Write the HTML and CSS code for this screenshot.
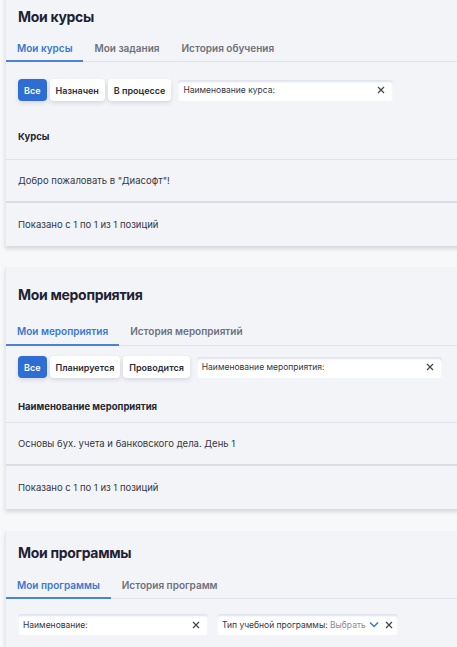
FILE: index.html
```html
<!DOCTYPE html>
<html>
<head>
<title>Мои курсы</title>
<link rel="stylesheet" href="styles.css">
</head>
<body>
  <div class="card card-courses">
    <h2 class="card-title">Мои курсы</h2>
    <div class="tabs">
      <div class="tab active">Мои курсы</div>
      <div class="tab">Мои задания</div>
      <div class="tab">История обучения</div>
    </div>
    <div class="filters">
      <button class="chip selected">Все</button>
      <button class="chip">Назначен</button>
      <button class="chip">В процессе</button>
      <div class="field field-course">
        <span class="field-label">Наименование курса:</span>
        <svg class="clear" width="8" height="8" viewBox="0 0 8 8"><path d="M1 1L7 7M7 1L1 7" stroke="#444" stroke-width="1.2"/></svg>
      </div>
    </div>
    <div class="table">
      <div class="row head">Курсы</div>
      <div class="row">Добро пожаловать в "Диасофт"!</div>
      <div class="row foot">Показано с 1 по 1 из 1 позиций</div>
    </div>
  </div>

  <div class="card card-events">
    <h2 class="card-title">Мои мероприятия</h2>
    <div class="tabs">
      <div class="tab active">Мои мероприятия</div>
      <div class="tab">История мероприятий</div>
    </div>
    <div class="filters">
      <button class="chip selected">Все</button>
      <button class="chip">Планируется</button>
      <button class="chip">Проводится</button>
      <div class="field field-event">
        <span class="field-label">Наименование мероприятия:</span>
        <svg class="clear" width="8" height="8" viewBox="0 0 8 8"><path d="M1 1L7 7M7 1L1 7" stroke="#444" stroke-width="1.2"/></svg>
      </div>
    </div>
    <div class="table">
      <div class="row head">Наименование мероприятия</div>
      <div class="row">Основы бух. учета и банковского дела. День 1</div>
      <div class="row foot">Показано с 1 по 1 из 1 позиций</div>
    </div>
  </div>

  <div class="card card-programs">
    <h2 class="card-title">Мои программы</h2>
    <div class="tabs">
      <div class="tab active">Мои программы</div>
      <div class="tab">История программ</div>
    </div>
    <div class="filters">
      <div class="field field-name">
        <span class="field-label">Наименование:</span>
        <svg class="clear" width="8" height="8" viewBox="0 0 8 8"><path d="M1 1L7 7M7 1L1 7" stroke="#444" stroke-width="1.2"/></svg>
      </div>
      <div class="field field-type">
        <span class="field-label">Тип учебной программы: <span class="placeholder">Выбрать</span></span>
        <svg class="chevron" width="10" height="7" viewBox="0 0 10 7"><path d="M1 1.5L5 5.5L9 1.5" fill="none" stroke="#3a78d0" stroke-width="1.5"/></svg>
        <svg class="clear" width="8" height="8" viewBox="0 0 8 8"><path d="M1 1L7 7M7 1L1 7" stroke="#444" stroke-width="1.2"/></svg>
      </div>
    </div>
  </div>
</body>
</html>
```

FILE: styles.css
```css
body {
  margin: 0;
  background-color: #f7f8fa;
  font-family: Inter, "Noto Sans", sans-serif;
  color: #2b2e38;
  overflow: hidden;
}

.card {
  background-color: #f3f4f8;
  margin-left: 5px;
  margin-right: -20px;
  border-left: 1px solid #e7e9ee;
  box-shadow: 0 3px 4px rgba(0, 0, 0, 0.13);
  padding-top: 17px;
}

.card-courses {
  margin-top: -10px;
  margin-bottom: 21px;
}

.card-events {
  padding-top: 18px;
  margin-bottom: 22px;
}

.card-programs {
  padding-top: 12px;
  padding-bottom: 40px;
}

.card-title {
  margin: 0 0 12px 12px;
  font-size: 14px;
  line-height: 20px;
  font-weight: 700;
  letter-spacing: -0.3px;
  color: #1f2233;
}

.card-courses .card-title {
  margin-bottom: 8px;
}

.card-events .card-title {
  margin-bottom: 13px;
}

.card-programs .card-title {
  margin-bottom: 9px;
}

.tabs {
  display: flex;
  border-bottom: 1px solid #e0e3e9;
}

.tab {
  padding: 6px 11px 5px;
  font-size: 10px;
  line-height: 14px;
  font-weight: 600;
  color: #6d717c;
  border-bottom: 2px solid transparent;
  margin-bottom: -1px;
}

.card-events .tab {
  padding-bottom: 6px;
}

.tab.active {
  color: #3a78d0;
  border-bottom-color: #4a84d8;
}

.filters {
  display: flex;
  align-items: center;
  gap: 3px;
  padding: 17px 12px 0;
}

.card-events .filters {
  padding-top: 10px;
}

.card-programs .filters {
  padding-top: 15px;
  gap: 9px;
}

.chip {
  height: 22px;
  padding: 0 6px;
  border: none;
  border-radius: 4px;
  background-color: #fff;
  box-shadow: 0 2px 4px rgba(40, 50, 80, 0.14);
  font-family: inherit;
  font-size: 9px;
  font-weight: 600;
  color: #2a2d36;
}

.chip.selected {
  background-color: #2d6dd4;
  color: #fff;
}

.field {
  display: flex;
  align-items: center;
  height: 21px;
  padding: 0 8px 0 5px;
  margin-left: 4px;
  background-color: #fff;
  border-radius: 3px;
  box-shadow: inset 0 2px 2px rgba(130, 140, 180, 0.25);
  font-size: 8.5px;
  color: #33363f;
}

.field svg {
  flex-shrink: 0;
}

.field-label {
  flex: 1;
  white-space: nowrap;
}

.placeholder {
  color: #8a8e98;
}

.field-course {
  width: 202px;
}

.field-event {
  width: 232px;
}

.field-name {
  width: 177px;
  margin-left: 0;
}

.field-type {
  width: 168px;
  margin-left: 0;
}

.chevron {
  margin: 0 6px 0 3px;
}

.table {
  margin-top: 13px;
}

.row {
  box-sizing: border-box;
  height: 43px;
  padding-left: 12px;
  display: flex;
  align-items: center;
  font-size: 9.5px;
  color: #34373f;
  border-bottom: 1px solid #e2e4ea;
}

.row.head {
  height: 46px;
  font-weight: 700;
  color: #24272f;
}

.card-events .row.head {
  height: 32px;
}

.row:nth-child(2) {
  border-bottom: 2px solid #d9dce2;
}

.row.foot {
  border-bottom: none;
}
```
